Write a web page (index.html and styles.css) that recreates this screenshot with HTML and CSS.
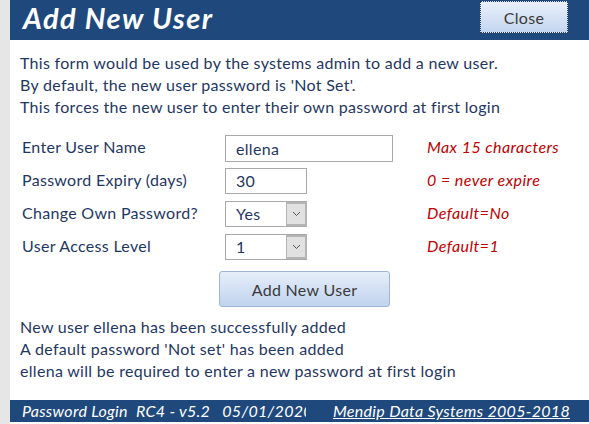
FILE: index.html
```html
<!DOCTYPE html>
<html>
<head>
<meta charset="utf-8">
<link rel="stylesheet" href="styles.css">
</head>
<body>
<div class="page">
  <div class="strip"></div>
  <div class="main">
    <header class="header">
      <h1 class="title">Add New User</h1>
      <button class="close-btn">Close</button>
    </header>
    <section class="content">
      <div class="intro">
        <p>This form would be used by the systems admin to add a new user.</p>
        <p>By default, the new user password is 'Not Set'.</p>
        <p>This forces the new user to enter their own password at first login</p>
      </div>
      <div class="form">
        <div class="label">Enter User Name</div>
        <div class="field"><div class="box box-wide">ellena</div></div>
        <div class="note">Max 15 characters</div>

        <div class="label">Password Expiry (days)</div>
        <div class="field"><div class="box box-short">30</div></div>
        <div class="note">0 = never expire</div>

        <div class="label">Change Own Password?</div>
        <div class="field"><div class="box box-short combo"><span class="val">Yes</span><span class="drop"><svg width="9" height="6" viewBox="0 0 9 6"><path d="M1 1 L4.5 4.5 L8 1" fill="none" stroke="#555" stroke-width="1"/></svg></span></div></div>
        <div class="note">Default=No</div>

        <div class="label">User Access Level</div>
        <div class="field"><div class="box box-short combo"><span class="val">1</span><span class="drop"><svg width="9" height="6" viewBox="0 0 9 6"><path d="M1 1 L4.5 4.5 L8 1" fill="none" stroke="#555" stroke-width="1"/></svg></span></div></div>
        <div class="note">Default=1</div>
      </div>
      <button class="add-btn">Add New User</button>
      <div class="result">
        <p>New user ellena has been successfully added</p>
        <p>A default password 'Not set' has been added</p>
        <p>ellena will be required to enter a new password at first login</p>
      </div>
    </section>
    <footer class="footer">
      <span class="ver">Password Login&nbsp; RC4 - v5.2 &nbsp; 05/01/2020</span>
      <span class="company">Mendip Data Systems 2005-2018</span>
    </footer>
  </div>
</div>
</body>
</html>
```

FILE: styles.css
```css
* { box-sizing: border-box; }
html, body { margin: 0; padding: 0; }
body {
  width: 589px;
  height: 424px;
  overflow: hidden;
  font-family: Lato, "Open Sans", "Liberation Sans", sans-serif;
  background: #ffffff;
}
p { margin: 0; }
.page {
  display: flex;
  height: 424px;
}
.strip {
  width: 10px;
  flex: none;
  background: #e6e6e6;
}
.main {
  flex: 1;
  display: flex;
  flex-direction: column;
  background: #ffffff;
  padding-bottom: 2px;
}
.header {
  height: 40px;
  flex: none;
  background: #1f497d;
  display: flex;
  align-items: flex-start;
  justify-content: space-between;
  padding-left: 13px;
  padding-right: 21px;
}
.title {
  margin: 0;
  color: #ffffff;
  font-size: 29px;
  font-weight: bold;
  font-style: italic;
  line-height: 35px;
  letter-spacing: 1.4px;
}
.close-btn {
  margin-top: 1px;
  width: 88px;
  height: 32px;
  border: 1px dotted #2b3b55;
  background: linear-gradient(#e9f0fb, #c4d6f0);
  font-family: inherit;
  font-size: 16px;
  letter-spacing: 0.3px;
  color: #3a3a3a;
  padding: 0;
}
.content {
  flex: 1;
  padding: 12px 0 0 10px;
  color: #1f3763;
  font-size: 16px;
  line-height: 22px;
  letter-spacing: 0.3px;
}
.form {
  margin-top: 17px;
  margin-left: 2px;
  display: grid;
  grid-template-columns: 203px 202px auto;
  grid-auto-rows: 27px;
  row-gap: 6px;
  align-items: center;
}
.label { color: #1f3763; padding-bottom: 3px; }
.field { height: 100%; display: flex; align-items: stretch; }
.box {
  border: 1px solid #a9a9a9;
  background: #fff;
  padding-left: 10px;
  display: flex;
  align-items: center;
  color: #1f3763;
  height: 27px;
}
.box-wide { width: 168px; }
.box-short { width: 82px; height: 26px; }
.combo { padding-right: 0; justify-content: space-between; }
.drop {
  width: 21px;
  height: 100%;
  background: #e1e1e1;
  border: 2px solid #b4b4b4;
  border-left-width: 1px;
  display: flex;
  align-items: center;
  justify-content: center;
  margin-right: -1px;
}
.note {
  color: #c00000;
  font-style: italic;
  letter-spacing: 0.45px;
  padding-bottom: 3px;
}
.add-btn {
  display: block;
  margin: 10px 0 0 199px;
  width: 171px;
  height: 36px;
  border: 1px solid #9fb6d4;
  border-radius: 3px;
  background: linear-gradient(#e6eefa, #c0d3ee);
  font-family: inherit;
  font-size: 16px;
  letter-spacing: 0.3px;
  color: #3a3a3a;
}
.result {
  margin-top: 9px;
}
.footer {
  height: 22px;
  flex: none;
  background: #1f497d;
  color: #ffffff;
  font-style: italic;
  font-size: 16px;
  letter-spacing: 0.3px;
  line-height: 22px;
  display: flex;
  padding-left: 12px;
}
.ver {
  width: 284px;
  overflow: hidden;
  white-space: nowrap;
  flex: none;
}
.company {
  margin-left: 27px;
  text-decoration: underline;
  white-space: nowrap;
}
```
